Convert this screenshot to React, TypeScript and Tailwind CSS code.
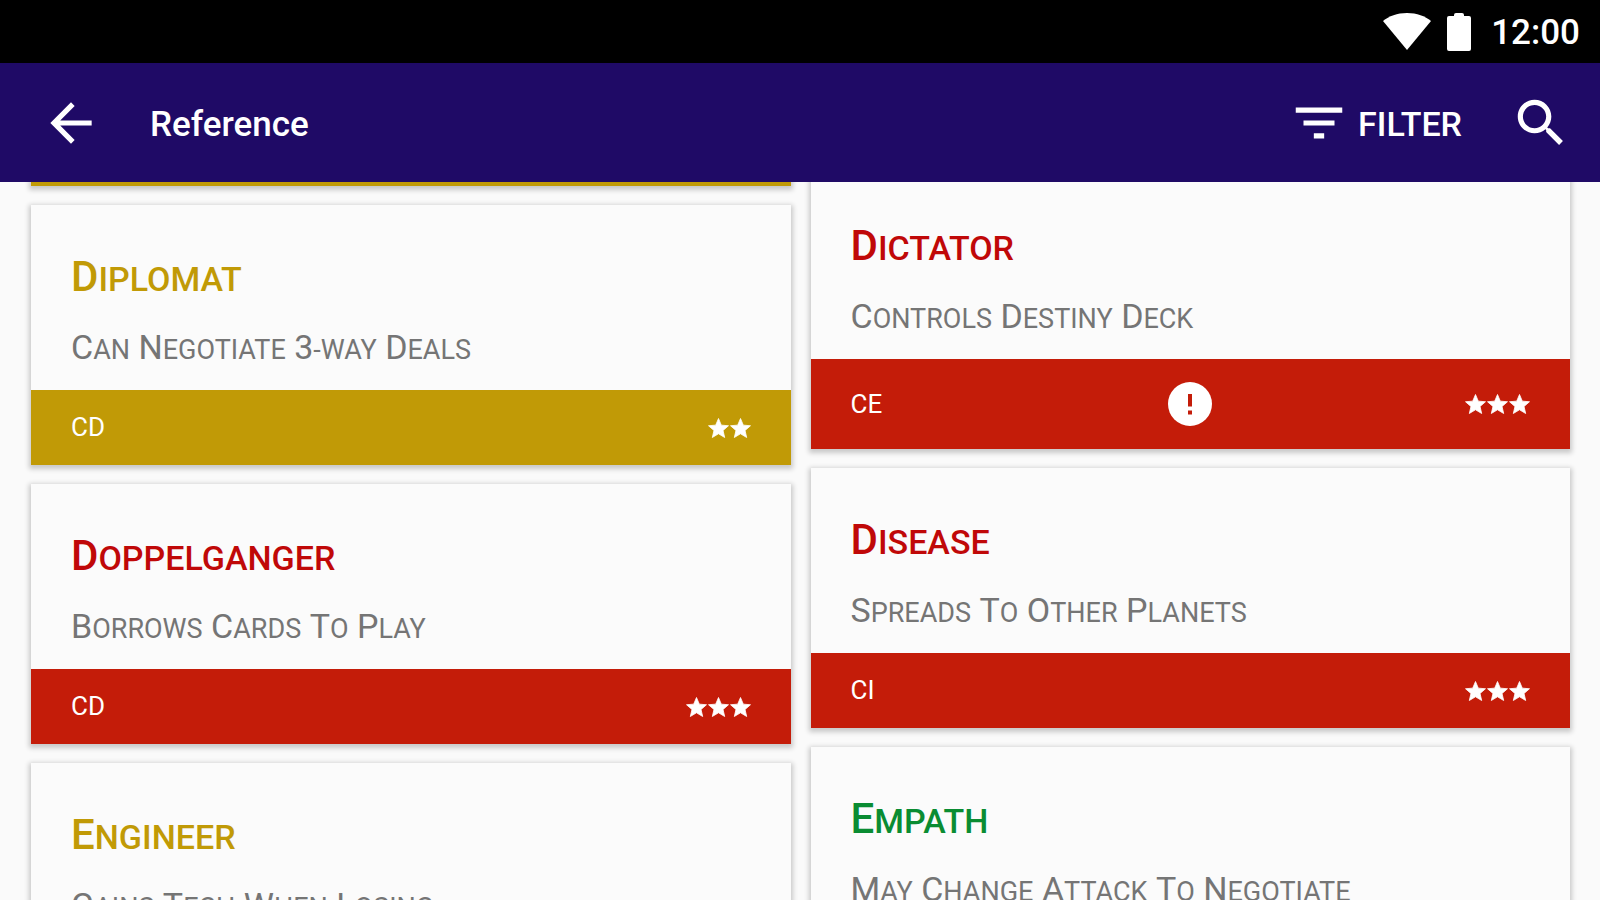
interface Alien {
  name: string;
  power: string;
  phases: string;
  stars: number;
  tone: Tone;
  warning?: boolean;
}

type Tone = "green" | "yellow" | "red";

const titleTones: Record<Tone, string> = {
  green: "text-[#0a8c32]",
  yellow: "text-[#c19a06]",
  red: "text-[#c00808]",
};

const footerTones: Record<Tone, string> = {
  green: "bg-[#0a8c32]",
  yellow: "bg-[#c19a06]",
  red: "bg-[#c41c09]",
};

const leftColumn: Alien[] = [
  { name: "Diplomat", power: "Can Negotiate 3-way Deals", phases: "CD", stars: 2, tone: "yellow" },
  { name: "Doppelganger", power: "Borrows Cards To Play", phases: "CD", stars: 3, tone: "red" },
  { name: "Engineer", power: "Gains Tech When Losing", phases: "CD", stars: 2, tone: "yellow" },
];

const rightColumn: Alien[] = [
  { name: "Dictator", power: "Controls Destiny Deck", phases: "CE", stars: 3, tone: "red", warning: true },
  { name: "Disease", power: "Spreads To Other Planets", phases: "CI", stars: 3, tone: "red" },
  { name: "Empath", power: "May Change Attack To Negotiate", phases: "CI", stars: 1, tone: "green" },
];

const Icon = ({ d, className }: { d: string; className: string }) => (
  <svg viewBox="0 0 24 24" fill="currentColor" className={className} aria-hidden="true">
    <path d={d} />
  </svg>
);

const SmallCaps = ({ text, className }: { text: string; className: string }) => (
  <>
    {text.split(" ").map((word, index) => (
      <span key={index}>
        {index > 0 && " "}
        <span className={`inline-block uppercase ${className}`}>{word}</span>
      </span>
    ))}
  </>
);

const StatusBar = () => (
  <div className="flex h-[63px] shrink-0 items-center justify-end bg-black pr-5 text-white">
    <svg viewBox="0 0 48 37" fill="currentColor" className="mr-4 h-[37px] w-12" aria-hidden="true">
      <path d="M24 37 0 8C6 3 14 0 24 0s18 3 24 8z" />
    </svg>
    <svg viewBox="0 0 24 38" fill="currentColor" className="mr-5 h-[38px] w-6" aria-hidden="true">
      <path d="M2 3h5V2q0-2 2-2h6q2 0 2 2v1h5q2 0 2 2v31q0 2-2 2H2q-2 0-2-2V5q0-2 2-2z" />
    </svg>
    <span className="pt-[2px] text-[35px] leading-10 font-medium">12:00</span>
  </div>
);

const AppBar = () => (
  <header className="flex h-[119px] shrink-0 items-center bg-[#1f0a66] pr-7 pl-10 text-white">
    <button type="button" aria-label="Back">
      <Icon className="size-[62px]" d="M20 11H7.83l5.59-5.59L12 4l-8 8 8 8 1.41-1.41L7.83 13H20v-2z" />
    </button>
    <h1 className="ml-12 pt-1 text-[35px] leading-10 font-medium">Reference</h1>
    <button type="button" className="ml-auto flex items-center gap-2 text-[34px] leading-10">
      <Icon className="size-[62px]" d="M10 18h4v-2h-4v2zM3 6v2h18V6H3zm3 7h12v-2H6v2z" />
      <span className="pt-[2px] font-medium">FILTER</span>
    </button>
    <button type="button" aria-label="Search" className="ml-12">
      <Icon
        className="size-[62px]"
        d="M15.5 14h-.79l-.28-.27C15.41 12.59 16 11.11 16 9.5 16 5.91 13.09 3 9.5 3S3 5.91 3 9.5 5.91 16 9.5 16c1.61 0 3.09-.59 4.23-1.57l.27.28v.79l5 4.99L20.49 19l-4.99-5zm-6 0C7.01 14 5 11.99 5 9.5S7.01 5 9.5 5 14 7.01 14 9.5 11.99 14 9.5 14z"
      />
    </button>
  </header>
);

const AlienCard = ({ alien }: { alien: Alien }) => (
  <article className="shrink-0 bg-[#fbfbfb] shadow-[0_2px_5px_2px_rgba(0,0,0,0.2)]">
    <div className="px-10 pt-12 pb-[23px]">
      <h2 className={`h-12 text-[42px] leading-12 font-medium ${titleTones[alien.tone]}`}>
        <SmallCaps text={alien.name} className="text-[34px] first-letter:text-[42px]" />
      </h2>
      <p className="mt-[26px] h-10 text-[34px] leading-10 whitespace-nowrap text-[#757575]">
        <SmallCaps text={alien.power} className="text-[27px] first-letter:text-[34px]" />
      </p>
    </div>
    <div
      className={`grid grid-cols-3 items-center px-10 py-4 text-white ${footerTones[alien.tone]}`}
    >
      <span className="text-[26px] leading-[43px]">{alien.phases}</span>
      <span className="flex justify-center">
        {alien.warning && (
          <svg viewBox="0 0 44 44" className="my-[7px] size-11" role="img" aria-label="Warning">
            <circle cx="22" cy="22" r="22" fill="#fff" />
            <path d="M20 12h4v12.500h-4zM20 28.500h4v4h-4z" fill="#c41c09" />
          </svg>
        )}
      </span>
      <span className="flex justify-end gap-px">
        {Array.from({ length: alien.stars }, (_, i) => (
          <svg key={i} viewBox="1.500 1.500 21 20" fill="currentColor" className="h-5 w-[21px]" aria-hidden="true">
            <path
              stroke="currentColor"
              strokeWidth="0.8"
              d="M12 17.27 18.18 21l-1.64-7.03L22 9.24l-7.19-.61L12 2 9.19 8.63 2 9.24l5.46 4.73L5.82 21z"
            />
          </svg>
        ))}
      </span>
    </div>
  </article>
);

export default function App() {
  return (
    <div className="flex h-screen flex-col overflow-hidden bg-[#fafafa] font-[Roboto,sans-serif]">
      <StatusBar />
      <AppBar />
      <main className="min-h-0 flex-1 overflow-hidden">
        {/* list is scrolled, so both columns start just above the fold */}
        <div className="-mt-2 grid grid-cols-2 gap-5 pr-[30px] pl-[31px]">
          <div className="flex flex-col gap-[19px]">
            <div className="h-3 shrink-0 bg-[#c19a06] shadow-[0_2px_5px_2px_rgba(0,0,0,0.2)]" />
            {leftColumn.map((alien) => (
              <AlienCard key={alien.name} alien={alien} />
            ))}
          </div>
          <div className="flex flex-col gap-[19px]">
            {rightColumn.map((alien) => (
              <AlienCard key={alien.name} alien={alien} />
            ))}
          </div>
        </div>
      </main>
    </div>
  );
}
